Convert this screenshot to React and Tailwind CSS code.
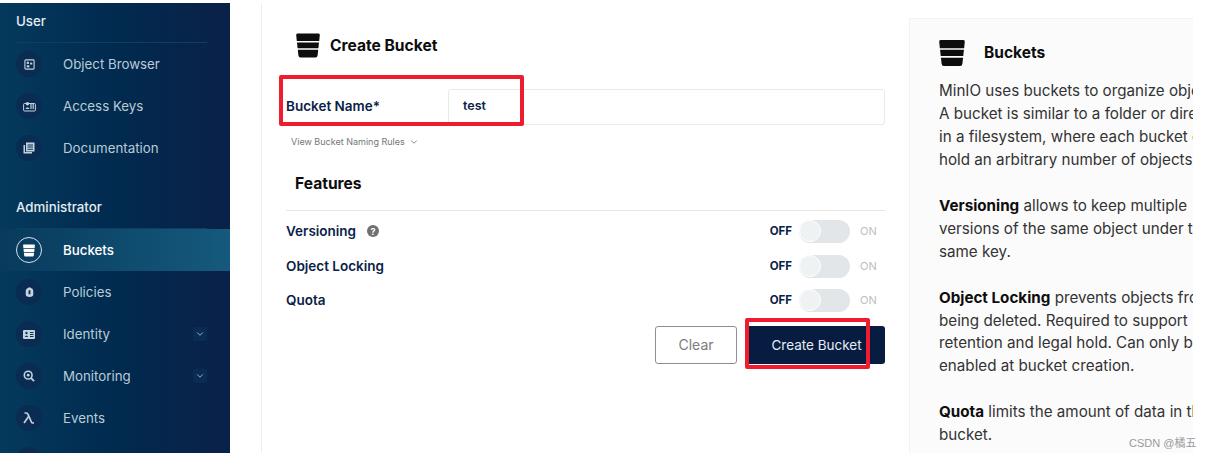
import React from "react";
import { ChevronDown } from "lucide-react";

const BucketIcon = ({ className }) => (
    <svg viewBox="0 0 24 24" className={className} fill="currentColor">
        <path d="M1.5 0 H22.5 Q24 0 23.8 1.5 L23.2 7.5 H0.8 L0.2 1.5 Q0 0 1.5 0 Z" />
        <path d="M1 9 H23 L22.4 14.8 H1.6 Z" />
        <path d="M1.8 16.3 H22.2 L21.6 22 Q21.4 24 19.5 24 H4.5 Q2.6 24 2.4 22 Z" />
    </svg>
);

const ObjectBrowserIcon = () => (
    <svg viewBox="0 0 12 12" className="w-[11px] h-[11px]" fill="none" stroke="currentColor">
        <rect x="1" y="1" width="10" height="10" rx="1" strokeWidth="1.2" />
        <rect x="3" y="3" width="2.4" height="2.4" fill="currentColor" stroke="none" />
        <rect x="6.6" y="4" width="2.4" height="2" fill="currentColor" stroke="none" />
        <rect x="3" y="6.8" width="2.8" height="2.4" fill="currentColor" stroke="none" />
    </svg>
);

const AccessKeysIcon = () => (
    <svg viewBox="0 0 13 11" className="w-[13px] h-[11px]" fill="none" stroke="currentColor">
        <rect x="0.6" y="2.5" width="11.8" height="7.5" rx="1" strokeWidth="1" />
        <circle cx="4.5" cy="2.8" r="1.7" fill="currentColor" stroke="none" />
        <path d="M2.4 8 Q4.5 4.5 6.6 8 Z" fill="currentColor" stroke="none" />
        <path d="M8 2 V8 M10.2 2 V8" strokeWidth="1.2" />
    </svg>
);

const DocumentationIcon = () => (
    <svg viewBox="0 0 12 12" className="w-[12px] h-[12px]" fill="currentColor">
        <path fillRule="evenodd" d="M3 0.5 H11.5 V9.5 H3 Z M4.5 2.5 V3.5 H10 V2.5 Z M4.5 4.6 V5.6 H10 V4.6 Z M4.5 6.7 V7.7 H10 V6.7 Z" />
        <path d="M0.5 3 H2 V10 H9 V11.5 H0.5 Z" />
    </svg>
);

const PoliciesIcon = () => (
    <svg viewBox="0 0 10 12" className="w-[9px] h-[12px]" fill="currentColor">
        <path fillRule="evenodd" d="M3.4 1.6 Q5 -0.4 6.6 1.6 Q9.2 2.4 9.2 5 V8.5 Q9.2 11.5 5 11.5 Q0.8 11.5 0.8 8.5 V5 Q0.8 2.4 3.4 1.6 Z M4 4 V8.5 H6 V4 Z" />
    </svg>
);

const IdentityIcon = () => (
    <svg viewBox="0 0 12 9" className="w-[12px] h-[9px]" fill="currentColor">
        <path fillRule="evenodd" d="M1 0 H11 Q12 0 12 1 V8 Q12 9 11 9 H1 Q0 9 0 8 V1 Q0 0 1 0 Z M7 2 V3 H10.5 V2 Z M7 4 V5 H10.5 V4 Z M7 6 V7 H10.5 V6 Z" />
        <circle cx="3.5" cy="3" r="1.2" fill="#0a3a5e" />
        <path d="M1.6 7 Q3.5 3.8 5.4 7 Z" fill="#0a3a5e" />
    </svg>
);

const MonitoringIcon = () => (
    <svg viewBox="0 0 13 13" className="w-[12px] h-[12px]" fill="none" stroke="currentColor">
        <circle cx="5.6" cy="5.6" r="4.2" strokeWidth="1.7" />
        <path d="M8.8 8.8 L12 12" strokeWidth="2" />
        <circle cx="5.6" cy="5.6" r="1.5" fill="currentColor" stroke="none" />
    </svg>
);

const LambdaIcon = () => (
    <svg viewBox="0 0 12 12" className="w-[12px] h-[12px]" fill="none" stroke="currentColor" strokeWidth="1.7">
        <path d="M1.5 1 H3.4 Q4.4 1 4.9 2.2 L8.4 10 Q8.8 11 10 11 H11" />
        <path d="M5.6 4.4 L1 11" />
    </svg>
);

const NavItem = ({ icon, label, active, expand }) => (
    <div className={`h-[42px] shrink-0 flex items-center pl-4 pr-[23px] ${active ? "bg-gradient-to-r from-[#083a5c] to-[#155a7d]" : ""}`}>
        <div className={`w-[26px] h-[26px] rounded-full flex items-center justify-center ${active ? "border border-[#d5e2ea] text-white" : "bg-[#0a2c52] text-[#c4d3df]"}`}>
            {icon}
        </div>
        <span className={`ml-[21px] pt-[2px] flex-1 text-[13.3px] ${active ? "text-white font-medium" : "text-[#b9cbd8]"}`}>
            {label}
        </span>
        {expand && (
            <div className="w-[14px] h-[14px] rounded-[2px] bg-[#0a2c52] flex items-center justify-center text-[#b9cbd8]">
                <ChevronDown className="w-[10px] h-[10px]" />
            </div>
        )}
    </div>
);

const SectionLabel = ({ label }) => (
    <div className="ml-4 mr-[23px] h-[40px] shrink-0 flex items-center pb-[2px] border-b border-[#0e3f63] text-[13.3px] font-medium text-[#e4ecf1]">
        {label}
    </div>
);

const FeatureRow = ({ label, help, height }) => (
    <div className={`flex items-center ${height}`}>
        <span className="text-[13.5px] font-semibold text-[#0a2147]">{label}</span>
        {help && (
            <span className="ml-[11px] w-[12px] h-[12px] rounded-full bg-[#707070] text-white text-[9px] font-bold flex items-center justify-center">
                ?
            </span>
        )}
        <span className="ml-auto text-[11.5px] font-bold text-[#0a2147]">OFF</span>
        <div className="ml-[7px] w-[51px] h-[23px] rounded-full bg-[#e2e6e8] flex items-center">
            <div className="w-[22px] h-[22px] rounded-full bg-[#eff2f3] border border-white" />
        </div>
        <span className="ml-[10px] w-[25px] text-[11px] text-[#bdbdbd]">ON</span>
    </div>
);

const App = () => {
    return (
        <div className="relative w-[1212px] h-[457px] overflow-hidden bg-white pt-[3px] pb-[4px] flex font-['Inter',sans-serif]">
            {/* Sidebar */}
            <aside className="w-[230px] shrink-0 overflow-hidden flex flex-col bg-gradient-to-r from-[#053a5c] via-[#012a4f] to-[#0a2148]">
                <SectionLabel label="User" />
                <NavItem icon={<ObjectBrowserIcon />} label="Object Browser" />
                <NavItem icon={<AccessKeysIcon />} label="Access Keys" />
                <NavItem icon={<DocumentationIcon />} label="Documentation" />
                <div className="h-[20px] shrink-0" />
                <SectionLabel label="Administrator" />
                <NavItem icon={<BucketIcon className="w-[12px] h-[13px]" />} label="Buckets" active />
                <NavItem icon={<PoliciesIcon />} label="Policies" />
                <NavItem icon={<IdentityIcon />} label="Identity" expand />
                <NavItem icon={<MonitoringIcon />} label="Monitoring" expand />
                <NavItem icon={<LambdaIcon />} label="Events" />
                <NavItem icon={null} label="" />
            </aside>

            {/* Main */}
            <main className="ml-[31px] w-[932px] shrink-0 border-l border-[#eeeeee] flex overflow-hidden">
                <section className="w-[646px] shrink-0 pl-[24px] pr-[23px] flex flex-col">
                    <div className="mt-[30px] ml-[10px] flex items-center gap-[10px] text-[#0d0d0d]">
                        <BucketIcon className="w-[24px] h-[25px]" />
                        <h1 className="text-[15.6px] font-bold">Create Bucket</h1>
                    </div>
                    <div className="mt-[31px] flex items-center h-[36px] shrink-0">
                        <label className="w-[162px] pb-[2px] text-[13.5px] font-semibold text-[#0a2147]">Bucket Name*</label>
                        <div className="flex-1 h-full border border-[#e9e9e9] rounded-[3px] flex items-center pl-[14px] pb-[2px] text-[12.5px] font-semibold text-[#0a2147]">
                            test
                        </div>
                    </div>
                    <div className="mt-[10px] ml-[5px] flex items-center gap-1 text-[9px] text-[#767676]">
                        View Bucket Naming Rules
                        <ChevronDown className="w-[10px] h-[10px]" />
                    </div>
                    <h2 className="mt-[23px] ml-[9px] text-[15.6px] font-bold text-[#0d0d0d]">Features</h2>
                    <div className="mt-[15px] mb-[1px] border-t border-[#e6e6e6]" />
                    <FeatureRow label="Versioning" help height="h-[39px]" />
                    <FeatureRow label="Object Locking" height="h-[31px]" />
                    <FeatureRow label="Quota" height="h-[37px]" />
                    <div className="mt-[7px] flex justify-end gap-[9px]">
                        <button className="w-[82px] h-[38px] border border-[#8f8f8f] rounded-[3px] text-[14px] text-[#7c7c7c]">
                            Clear
                        </button>
                        <button className="w-[139px] h-[38px] pl-[2px] rounded-[3px] bg-[#081c42] text-[13.5px] text-[#e6ecf2]">
                            Create Bucket
                        </button>
                    </div>
                </section>

                {/* Help panel */}
                <section className="ml-[1px] mt-[15px] flex-1 border border-[#f2f2f2] border-r-0 border-b-0 bg-[#fbfbfb] pl-[29px] pt-[21px] overflow-hidden">
                    <div className="flex items-center gap-[19px] text-[#0d0d0d]">
                        <BucketIcon className="w-[26px] h-[26px]" />
                        <h2 className="text-[15.5px] font-bold">Buckets</h2>
                    </div>
                    <div className="mt-[14px] w-[254px] overflow-hidden text-[15.2px] leading-[22.95px] text-[#333333] whitespace-nowrap">
                        <p>MinIO uses buckets to organize objects.</p>
                        <p>A bucket is similar to a folder or directory</p>
                        <p>in a filesystem, where each bucket can</p>
                        <p>hold an arbitrary number of objects.</p>
                        <p className="mt-[22.95px]"><b className="text-[#0d0d0d]">Versioning</b> allows to keep multiple</p>
                        <p>versions of the same object under the</p>
                        <p>same key.</p>
                        <p className="mt-[22.95px]"><b className="text-[#0d0d0d]">Object Locking</b> prevents objects from</p>
                        <p>being deleted. Required to support</p>
                        <p>retention and legal hold. Can only be</p>
                        <p>enabled at bucket creation.</p>
                        <p className="mt-[22.95px]"><b className="text-[#0d0d0d]">Quota</b> limits the amount of data in the</p>
                        <p>bucket.</p>
                    </div>
                </section>
            </main>

            {/* Annotations drawn over the screenshot */}
            <div className="absolute left-[279px] top-[75px] w-[245px] h-[51px] border-[4px] border-[#ee1c2e] rounded-[2px]" />
            <div className="absolute left-[745px] top-[318px] w-[125px] h-[51px] border-[4px] border-[#ee1c2e] rounded-[2px]" />
            <div className="absolute left-[1129px] top-[435px] text-[11px] text-[#9a9a9a] font-['Liberation_Sans','Noto_Sans_CJK_SC',sans-serif]">
                CSDN @橘五
            </div>
        </div>
    );
};

export default App;
